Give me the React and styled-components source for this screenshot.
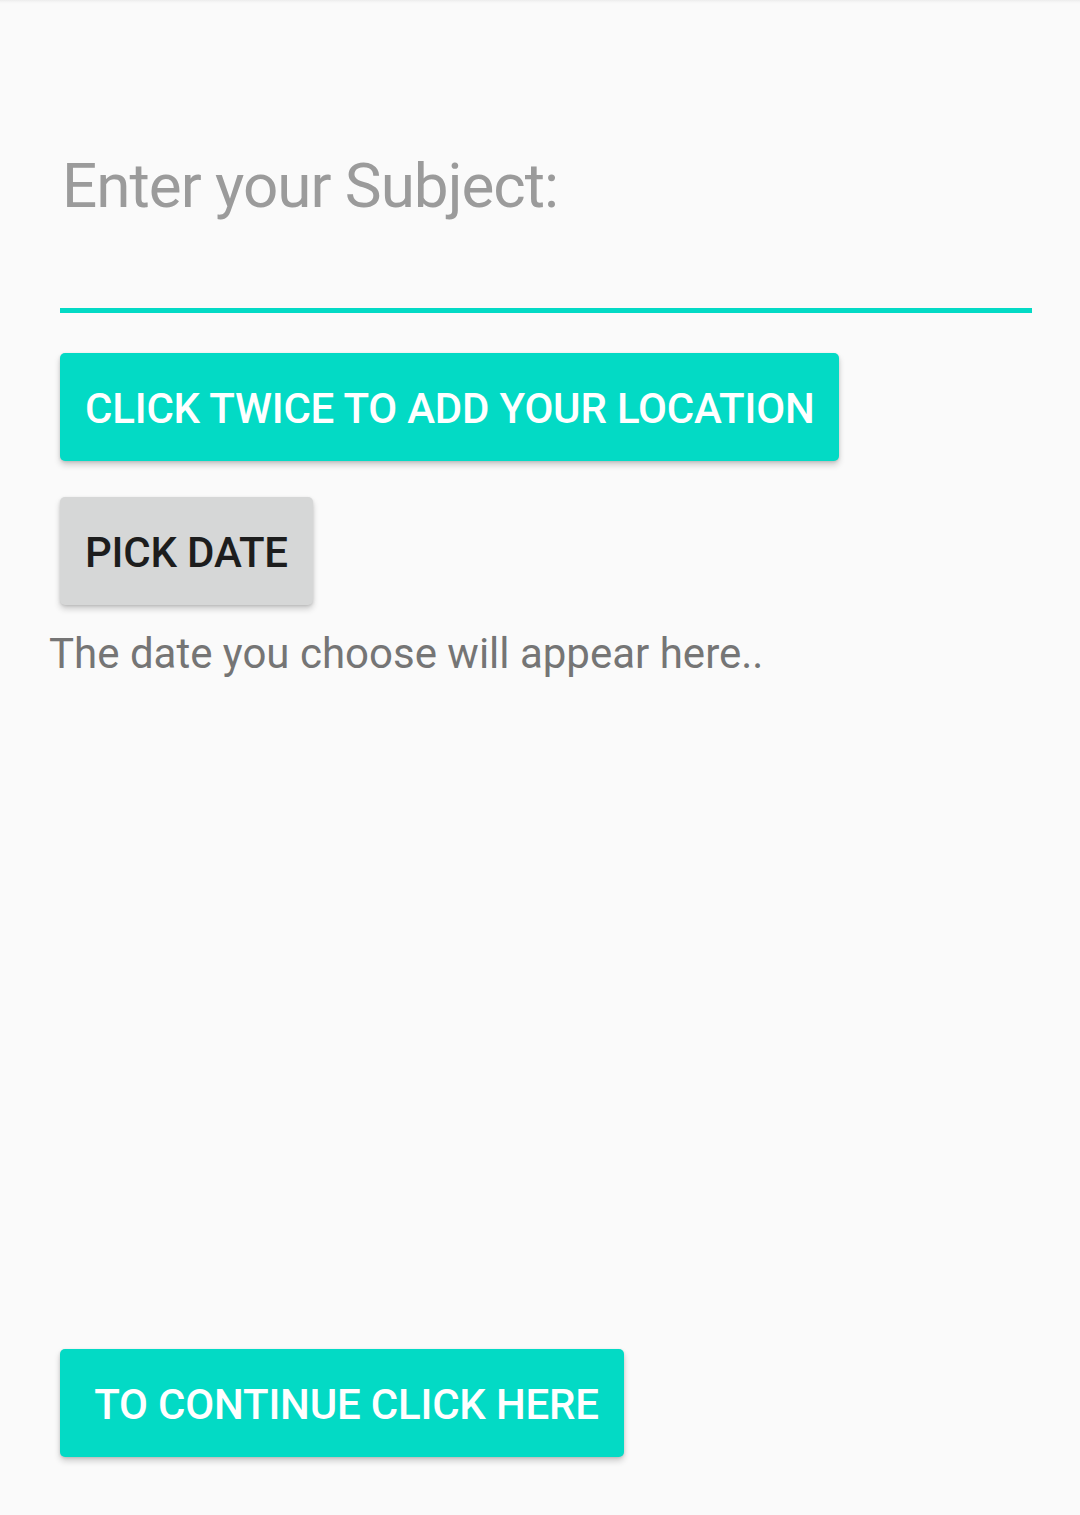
import React from 'react'
import styled, { createGlobalStyle } from 'styled-components'

const Global = createGlobalStyle`
  html, body {
    margin: 0;
    padding: 0;
    background: #fafafa;
  }
  body {
    font-family: Roboto, "Noto Sans", "Liberation Sans", sans-serif;
  }
`

const Screen = styled.div`
  min-height: 100vh;
  box-sizing: border-box;
  display: flex;
  flex-direction: column;
  align-items: flex-start;
  padding: 149px 48px 58px 49px;
  background: linear-gradient(to bottom, #ececec 0, #f6f6f6 2px, #fafafa 4px);
`

const SubjectInput = styled.input`
  align-self: stretch;
  margin-left: 11px;
  height: 74px;
  padding: 0 0 85px 2px;
  border: none;
  border-bottom: 5px solid #03dac5;
  background: transparent;
  outline: none;
  font-family: Roboto, "Noto Sans", sans-serif;
  font-size: 62px;
  line-height: 74px;
  letter-spacing: -1px;
  color: #212121;

  &::placeholder {
    color: #9b9b9b;
  }
`

const Button = styled.button`
  display: flex;
  align-items: center;
  box-sizing: border-box;
  height: 108px;
  margin: ${p => p.$top}px 0 0 11px;
  padding: 3px 25px 0;
  border: none;
  border-radius: 5px;
  background: ${p => (p.$plain ? '#d6d7d7' : '#03dac5')};
  color: ${p => (p.$plain ? '#1d1d1d' : '#ffffff')};
  box-shadow: 0 4px 6px rgba(0, 0, 0, 0.18), 0 1px 3px rgba(0, 0, 0, 0.12);
  font-family: Roboto, "Noto Sans", sans-serif;
  font-weight: 500;
  font-size: 42px;
  line-height: 50px;
  letter-spacing: -0.2px;
  text-transform: uppercase;
  white-space: pre;
  cursor: pointer;
`

const DateNote = styled.p`
  margin: 25px 0 0;
  font-size: 42px;
  line-height: 48px;
  color: #757575;
`

const Spacer = styled.div`
  flex: 1;
`

export default function App() {
  return (
    <>
      <Global />
      <Screen>
        <SubjectInput placeholder="Enter your Subject:" />
        <Button $top={40}>Click twice to add your location</Button>
        <Button $top={36} $plain>Pick date</Button>
        <DateNote>The date you choose will appear here..</DateNote>
        <Spacer />
        <Button $top={0}>{' To continue click here'}</Button>
      </Screen>
    </>
  )
}
